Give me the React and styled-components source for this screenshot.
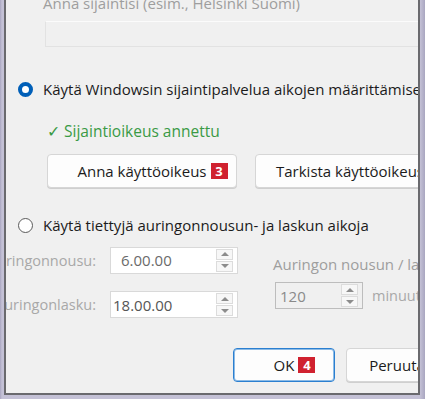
import styled, { createGlobalStyle } from 'styled-components';

const GlobalStyle = createGlobalStyle`
  html, body {
    margin: 0;
    padding: 0;
    background: #b9b6cc;
  }
  body {
    font-family: "Open Sans", "Noto Sans", sans-serif;
  }
`;

const Frame = styled.div`
  box-sizing: border-box;
  width: 425px;
  height: 399px;
  padding: 0 5px 4px 4px;
  background: linear-gradient(to right, #a9a6c0, #c4c1d6 2px, #c4c1d6 420px, #a9a6c0);
`;

const Window = styled.div`
  box-sizing: border-box;
  height: 100%;
  background: #f0f0f0;
  border: 2px solid #6a6a6e;
  border-top: none;
  overflow: hidden;
`;

const Content = styled.div`
  width: 560px;
  display: flex;
  flex-direction: column;
`;

const Section = styled.div`
  padding-left: 37px;
  display: flex;
  flex-direction: column;
`;

const Caption = styled.div`
  font-size: 15px;
  line-height: 20px;
  color: ${p => (p.$dim ? '#9e9e9e' : '#1b1b1b')};
  margin: ${p => p.$margin || 0};
  white-space: nowrap;
`;

const LocationBox = styled.div`
  margin: 8px 0 0 2px;
  height: 24px;
  border: 1px solid #e2e2e2;
  border-top-color: #fbfbfb;
  background: #f0f0f0;
`;

const RadioRow = styled.label`
  display: flex;
  align-items: center;
  gap: 10px;
  margin: ${p => p.$margin};
  padding-left: 12px;
  font-size: 15px;
  color: #1b1b1b;
  white-space: nowrap;
`;

const RadioDot = styled.span`
  box-sizing: border-box;
  width: 15px;
  height: 15px;
  border-radius: 50%;
  flex-shrink: 0;
  background: #fff;
  border: ${p => (p.$checked ? '4px solid #005fb8' : '1px solid #5a5a5a')};
`;

const Granted = styled.div`
  margin: 21px 0 0 41px;
  font-size: 15.5px;
  color: #3a9a45;
  white-space: nowrap;
`;

const ButtonRow = styled.div`
  display: flex;
  gap: ${p => p.$gap}px;
  margin: ${p => p.$margin};
`;

const Button = styled.button`
  box-sizing: border-box;
  width: ${p => p.$width}px;
  height: 34px;
  display: flex;
  align-items: center;
  justify-content: center;
  font-family: inherit;
  font-size: 15px;
  color: #1b1b1b;
  background: #fdfdfd;
  border: 1px solid ${p => (p.$primary ? '#2b7fd0' : '#d6d6d6')};
  box-shadow: ${p => (p.$primary ? 'inset 0 0 0 1px #8dbbe6' : '0 1px 0 #cfcfcf')};
  border-radius: 4px;
  padding: 0 8px;
  white-space: nowrap;
`;

const ButtonText = styled.span`
  position: relative;
`;

const Badge = styled.span`
  position: absolute;
  left: calc(100% + 4px);
  top: 50%;
  transform: translateY(-50%);
  display: flex;
  align-items: center;
  justify-content: center;
  width: 17px;
  height: 16px;
  background: #d0212f;
  color: #fff;
  font-weight: 700;
  font-size: 13px;
  line-height: 1;
`;

const TimeGrid = styled.div`
  display: grid;
  grid-template-columns: 90px 128px auto;
  column-gap: 14px;
  row-gap: 17px;
  margin-top: 11px;
  align-items: center;
`;

const FieldLabel = styled.div`
  display: flex;
  justify-content: flex-end;
  font-size: 14.5px;
  color: #a8a8a8;
  white-space: nowrap;
`;

const SpinBox = styled.div`
  box-sizing: border-box;
  width: ${p => p.$width}px;
  height: 27px;
  display: flex;
  align-items: center;
  background: ${p => (p.$disabled ? '#f0f0f0' : '#fff')};
  border: 1px solid ${p => (p.$disabled ? '#bdbdbd' : '#d9d9d9')};
  padding: 0 4px 0 ${p => p.$pad}px;
`;

const SpinValue = styled.span`
  flex: 1;
  font-size: 15px;
  color: ${p => p.$color};
`;

const Arrows = styled.div`
  display: flex;
  flex-direction: column;
  gap: 1px;
`;

const ArrowBtn = styled.span`
  box-sizing: border-box;
  width: 17px;
  height: 11px;
  display: flex;
  align-items: center;
  justify-content: center;
  background: #f7f7f7;
  border: 1px solid #dcdcdc;
  &::after {
    content: '';
    border-left: 4px solid transparent;
    border-right: 4px solid transparent;
    ${p => (p.$down ? 'border-top: 4px solid #8c8c8c;' : 'border-bottom: 4px solid #8c8c8c;')}
  }
`;

const OffsetCell = styled.div`
  display: flex;
  align-items: center;
  gap: 9px;
  white-space: nowrap;
  margin: -18px 0 0 23px;
`;

const Unit = styled.span`
  font-size: 14.5px;
  color: #a8a8a8;
`;

function Spinner({ value, width, pad, color, disabled }) {
  return (
    <SpinBox $width={width} $pad={pad} $disabled={disabled}>
      <SpinValue $color={color}>{value}</SpinValue>
      <Arrows>
        <ArrowBtn />
        <ArrowBtn $down />
      </Arrows>
    </SpinBox>
  );
}

export default function App() {
  return (
    <>
      <GlobalStyle />
      <Frame>
        <Window>
          <Content>
            <Section>
              <Caption $dim $margin="-7px 0 0 0">Anna sijaintisi (esim., Helsinki Suomi)</Caption>
              <LocationBox />
            </Section>

            <RadioRow $margin="32px 0 0 0">
              <RadioDot $checked />
              Käytä Windowsin sijaintipalvelua aikojen määrittämiseen
            </RadioRow>
            <Granted>✓ Sijaintioikeus annettu</Granted>
            <ButtonRow $gap={18} $margin="12px 0 0 41px">
              <Button $width={190}>
                <ButtonText>
                  Anna käyttöoikeus<Badge>3</Badge>
                </ButtonText>
              </Button>
              <Button $width={190}>Tarkista käyttöoikeus</Button>
            </ButtonRow>

            <RadioRow $margin="27px 0 0 0">
              <RadioDot />
              Käytä tiettyjä auringonnousun- ja laskun aikoja
            </RadioRow>

            <TimeGrid>
              <FieldLabel>Auringonnousu:</FieldLabel>
              <Spinner value="6.00.00" width={128} pad={10} color="#6a6a6a" />
              <Caption $dim $margin="8px 0 0 21px">Auringon nousun / laskun siirtymä</Caption>
              <FieldLabel>Auringonlasku:</FieldLabel>
              <Spinner value="18.00.00" width={128} pad={2} color="#555" />
              <OffsetCell>
                <Spinner value="120" width={88} pad={4} color="#8a8a8a" disabled />
                <Unit>minuuttia</Unit>
              </OffsetCell>
            </TimeGrid>

            <ButtonRow $gap={11} $margin="30px 0 0 227px">
              <Button $width={102} $primary>
                <ButtonText>
                  OK<Badge>4</Badge>
                </ButtonText>
              </Button>
              <Button $width={102}>Peruuta</Button>
            </ButtonRow>
          </Content>
        </Window>
      </Frame>
    </>
  );
}
